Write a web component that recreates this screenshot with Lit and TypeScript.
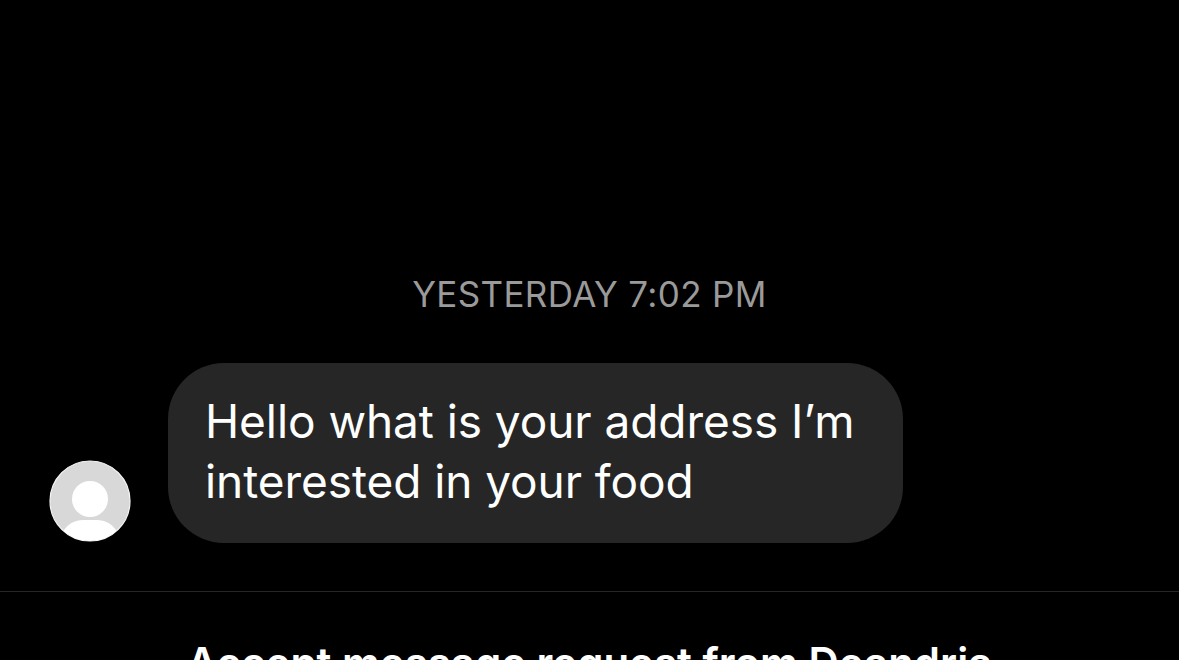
import { LitElement, html, css } from "lit";
import { customElement } from "lit/decorators.js";

@customElement("app-root")
export class AppRoot extends LitElement {
  static styles = css`
    :host {
      display: block;
      width: 1179px;
      height: 660px;
      overflow: hidden;
      background: #000;
      font-family: Inter, "Liberation Sans", sans-serif;
    }
    .time {
      padding-top: 274px;
      height: 40px;
      line-height: 40px;
      text-align: center;
      font-size: 35px;
      font-weight: 400;
      color: #9a9a9a;
      letter-spacing: 0.35px;
      white-space: nowrap;
    }
    .row {
      display: flex;
      align-items: flex-end;
      gap: 37px;
      margin-top: 49px;
      padding-left: 49px;
    }
    .avatar {
      display: block;
      width: 82px;
      height: 82px;
      flex: none;
      margin-bottom: 1px;
    }
    .bubble {
      width: 735px;
      height: 180px;
      box-sizing: border-box;
      border-radius: 56px;
      background: #262626;
      color: #fff;
      padding: 28px 36px 28px 37px;
      font-size: 46px;
      letter-spacing: -0.07px;
      line-height: 60px;
      white-space: nowrap;
    }
    .rule {
      margin-top: 48px;
      height: 1px;
      background: #262626;
    }
    .accept {
      margin-top: 47px;
      text-align: center;
      color: #fff;
      font-size: 42px;
      font-weight: 600;
      line-height: 48px;
      white-space: nowrap;
    }
  `;

  render() {
    return html`
      <div class="time">YESTERDAY 7:02 PM</div>
      <div class="row">
        <svg class="avatar" viewBox="0 0 82 82" aria-hidden="true">
          <defs>
            <clipPath id="c"><circle cx="41" cy="41" r="40"></circle></clipPath>
          </defs>
          <circle cx="41" cy="41" r="40" fill="#d8d8d8" stroke="#f4f4f4" stroke-width="1.2"></circle>
          <circle cx="41" cy="39" r="18" fill="#fff"></circle>
          <g clip-path="url(#c)">
            <path d="M14 82 V72 C18 64 26 60 34 60 H48 C56 60 64 64 68 72 V82 Z" fill="#fff"></path>
          </g>
        </svg>
        <div class="bubble">Hello what is your address I’m<br />interested in your food</div>
      </div>
      <div class="rule"></div>
      <div class="accept">Accept message request from Deandria</div>
    `;
  }
}
